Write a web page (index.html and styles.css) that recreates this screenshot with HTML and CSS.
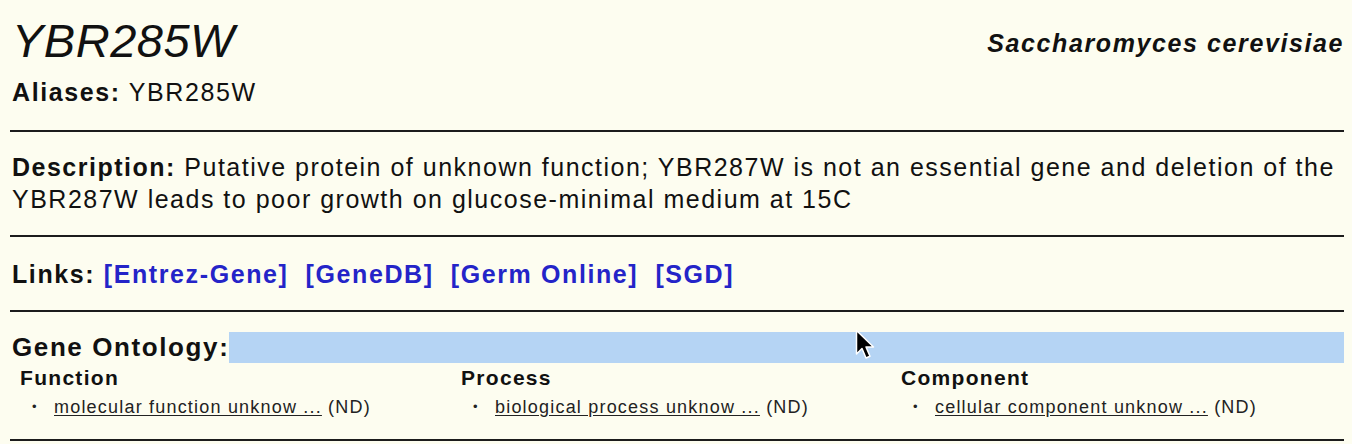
FILE: index.html
```html
<!DOCTYPE html>
<html>
<head>
<meta charset="utf-8">
<link rel="stylesheet" href="styles.css">
</head>
<body>
<div class="page">
  <div class="header">
    <h1 class="gene">YBR285W</h1>
    <div class="species">Saccharomyces cerevisiae</div>
  </div>
  <div class="aliases"><b>Aliases:</b> YBR285W</div>
  <hr class="rule">
  <div class="desc"><b>Description:</b> Putative protein of unknown function; YBR287W is not an essential gene and deletion of the YBR287W leads to poor growth on glucose-minimal medium at 15C</div>
  <hr class="rule">
  <div class="links"><b>Links:</b> <a href="#">[Entrez-Gene]</a>&nbsp; <a href="#">[GeneDB]</a>&nbsp; <a href="#">[Germ Online]</a>&nbsp; <a href="#">[SGD]</a></div>
  <hr class="rule">
  <div class="go">
    <div class="go-title"><span class="go-label">Gene Ontology:</span><span class="go-sel"></span></div>
    <div class="go-cols">
      <div class="go-col">
        <div class="go-head">Function</div>
        <ul class="go-list"><li><a href="#">molecular function unknow ...</a> (ND)</li></ul>
      </div>
      <div class="go-col">
        <div class="go-head">Process</div>
        <ul class="go-list"><li><a href="#">biological process unknow ...</a> (ND)</li></ul>
      </div>
      <div class="go-col">
        <div class="go-head">Component</div>
        <ul class="go-list"><li><a href="#">cellular component unknow ...</a> (ND)</li></ul>
      </div>
    </div>
  </div>
  <hr class="rule">
  <svg class="cursor" width="22" height="34" viewBox="0 0 22 34"><path d="M1.5 1.5 L1.5 25 L7 19.5 L11 29 L15 27.3 L11 18 L18.5 18 Z" fill="#000" stroke="#fff" stroke-width="1.5" stroke-linejoin="round"/></svg>
</div>
</body>
</html>
```
FILE: styles.css
```css
html, body {
  margin: 0;
  padding: 0;
  background: #fdfdf0;
}
.page {
  position: relative;
  padding: 0 8px 0 10px;
  font-family: "Liberation Sans", Arial, sans-serif;
  color: #111;
  font-size: 25px;
  letter-spacing: 1.6px;
}
.header {
  display: flex;
  justify-content: space-between;
  align-items: flex-start;
  padding-top: 13px;
}
.gene {
  margin: 0;
  font-size: 47px;
  font-weight: normal;
  font-style: italic;
  line-height: 56px;
  padding-left: 2px;
  letter-spacing: 0.5px;
}
.species {
  margin-top: 15px;
  font-weight: bold;
  font-style: italic;
  font-size: 25px;
  line-height: 30px;
}
.aliases {
  margin-top: 8px;
  padding-left: 2px;
  line-height: 30px;
}
.rule {
  margin: 0;
  border: 0;
  height: 2px;
  background: #1c1c1c;
}
.aliases + .rule { margin-top: 23px; }
.desc {
  padding: 19px 0 0 2px;
  line-height: 32px;
  margin-bottom: 20px;
  letter-spacing: 1.5px;
}
.links {
  padding: 22px 0 0 2px;
  line-height: 30px;
  margin-bottom: 21px;
}
.links a {
  color: #2424c8;
  font-weight: bold;
  text-decoration: none;
}
.go {
  padding: 20px 0 21px 2px;
}
.go-title {
  display: flex;
  height: 31px;
}
.go-label {
  font-weight: bold;
  font-size: 26px;
  line-height: 31px;
}
.go-sel {
  flex: 1;
  background: #b5d4f4;
}
.go-cols {
  display: grid;
  grid-template-columns: 441px 440px 1fr;
  padding-left: 8px;
  margin-top: 2px;
}
.go-head {
  font-weight: bold;
  font-size: 21px;
  line-height: 26px;
  letter-spacing: 1.3px;
}
.go-list {
  list-style: none;
  margin: 5px 0 0 12px;
  padding: 0;
  font-size: 18px;
  line-height: 22px;
  letter-spacing: 1.2px;
  color: #222;
}
.go-list li::before {
  content: "\2022";
  display: inline-block;
  width: 22px;
  font-size: 13px;
  letter-spacing: 0;
  vertical-align: 2px;
}
.go-list a {
  color: #222;
  text-underline-offset: 2px;
}
.cursor {
  position: absolute;
  left: 855px;
  top: 329px;
}
```
